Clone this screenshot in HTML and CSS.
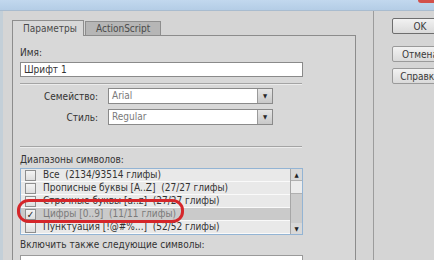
FILE: index.html
```html
<!DOCTYPE html>
<html lang="ru">
<head>
    <meta charset="UTF-8">
    <title>Свойства шрифта</title>
    <link rel="stylesheet" href="styles.css">
</head>
<body>
    <div class="titlebar">
        <div class="close-btn"></div>
    </div>

    <div class="window">
        <div class="frame"></div>

        <div class="main">
            <div class="tabs">
                <div class="tab active">Параметры</div>
                <div class="tab">ActionScript</div>
            </div>

            <div class="panel">
                <div class="label">Имя:</div>
                <div class="input">Шрифт 1</div>

                <div class="separator"></div>

                <div class="field-row">
                    <div class="field-label">Семейство:</div>
                    <div class="select">
                        <span class="select-value">Arial</span>
                        <span class="select-arrow">&#9660;</span>
                    </div>
                </div>
                <div class="field-row second">
                    <div class="field-label">Стиль:</div>
                    <div class="select">
                        <span class="select-value">Regular</span>
                        <span class="select-arrow">&#9660;</span>
                    </div>
                </div>

                <div class="separator lower"></div>

                <div class="label ranges-label">Диапазоны символов:</div>
                <div class="listbox">
                    <div class="list-rows">
                        <div class="list-row"><span class="checkbox"></span>Все&nbsp;&nbsp;(2134/93514 глифы)</div>
                        <div class="list-row"><span class="checkbox"></span>Прописные буквы [A..Z]&nbsp;&nbsp;(27/27 глифы)</div>
                        <div class="list-row"><span class="checkbox"></span>Строчные буквы [a..z]&nbsp;&nbsp;(27/27 глифы)</div>
                        <div class="list-row selected"><span class="checkbox checked">&#10003;</span>Цифры [0..9]&nbsp;&nbsp;(11/11 глифы)</div>
                        <div class="list-row"><span class="checkbox"></span>Пунктуация [!@#%...]&nbsp;&nbsp;(52/52 глифы)</div>
                    </div>
                    <div class="scrollbar">
                        <div class="scroll-btn">&#9650;</div>
                        <div class="scroll-thumb"></div>
                        <div class="scroll-track"></div>
                        <div class="scroll-btn">&#9660;</div>
                    </div>
                    <div class="highlight"></div>
                </div>

                <div class="label include-label">Включить также следующие символы:</div>
                <div class="input empty"></div>
            </div>
        </div>

        <div class="vline"></div>

        <div class="buttons">
            <button class="button">OK</button>
            <button class="button cancel">Отмена</button>
            <button class="button help">Справка</button>
        </div>
    </div>
</body>
</html>
```

FILE: styles.css
```css
body {
    margin: 0;
    padding: 0;
    width: 434px;
    height: 260px;
    overflow: hidden;
    background-color: #d5d5d5;
    font-family: "DejaVu Sans Condensed", "DejaVu Sans", sans-serif;
    font-size: 10px;
    color: #333333;
}

.titlebar {
    height: 10px;
    background: linear-gradient(to bottom, #c2d8ee, #b4cde6);
    border-bottom: 1px solid #a9bccf;
    position: relative;
}

.close-btn {
    position: absolute;
    right: 0;
    top: 0;
    width: 16px;
    height: 3px;
    background-color: #d2504a;
    border-radius: 0 0 0 5px;
}

.window {
    display: flex;
    height: 249px;
    width: 434px;
    overflow: hidden;
}

.window > div {
    flex-shrink: 0;
}

.frame {
    width: 3px;
    background-color: #c3cfd8;
}

.main {
    width: 344px;
    margin-left: 9px;
    display: flex;
    flex-direction: column;
}

.tabs {
    display: flex;
    margin-top: 9px;
    height: 15px;
    align-items: flex-end;
}

.tab {
    height: 13px;
    line-height: 13px;
    padding: 0 10px;
    border: 1px solid #8e8e8e;
    border-bottom: none;
    background-color: #b6b6b6;
    color: #4a4a4a;
    margin-left: 1px;
}

.tab.active {
    height: 15px;
    line-height: 16px;
    margin-left: 0;
    margin-bottom: -1px;
    background-color: #d8d8d8;
    position: relative;
    z-index: 1;
    width: 50px;
}

.panel {
    flex: 1;
    border: 1px solid #8c8c8c;
    border-bottom: none;
    background-color: #d8d8d8;
    padding-left: 7px;
}

.label {
    height: 12px;
    line-height: 12px;
    margin-top: 11px;
}

.input {
    width: 278px;
    height: 13px;
    line-height: 13px;
    margin-top: 3px;
    padding-left: 3px;
    border: 1px solid #8a8a8a;
    background-color: #ffffff;
}

.input.empty {
    margin-top: 4px;
    border-color: #9a9a9a;
}

.separator {
    width: 282px;
    height: 1px;
    margin-top: 6px;
    background-color: #a4a4a4;
    border-bottom: 1px solid #ececec;
}

.separator.lower {
    margin-top: 21px;
}

.field-row {
    display: flex;
    align-items: center;
    margin-top: 3px;
}

.field-row.second {
    margin-top: 5px;
}

.field-label {
    width: 78px;
    text-align: right;
    margin-right: 10px;
}

.select {
    width: 163px;
    height: 14px;
    border: 1px solid #8a8a8a;
    background-color: #ffffff;
    display: flex;
}

.select-value {
    flex: 1;
    line-height: 14px;
    padding-left: 3px;
    color: #7a7a7a;
}

.select-arrow {
    width: 14px;
    border-left: 1px solid #9a9a9a;
    background: linear-gradient(to bottom, #e6e6e6, #c8c8c8);
    color: #2a2a2a;
    font-size: 6px;
    line-height: 14px;
    text-align: center;
}

.ranges-label {
    margin-top: 6px;
}

.listbox {
    position: relative;
    display: flex;
    width: 281px;
    height: 65px;
    margin-top: 2px;
    border: 1px solid #93b4d4;
    background-color: #e9e9e9;
}

.list-rows {
    flex: 1;
}

.list-row {
    height: 12px;
    line-height: 12px;
    border-bottom: 1px solid #fafafa;
    display: flex;
    align-items: center;
    white-space: nowrap;
    overflow: hidden;
}

.list-row.selected {
    background-color: #cacaca;
    color: #7a7a7a;
}

.checkbox {
    width: 9px;
    height: 9px;
    margin: 0 7px 0 4px;
    border: 1px solid #8e8e8e;
    background: linear-gradient(to bottom, #f4f4f4, #dedede);
    flex-shrink: 0;
    font-size: 10px;
    line-height: 9px;
    text-align: center;
    color: #222;
}

.scrollbar {
    width: 11px;
    border-left: 1px solid #a6a6a6;
    display: flex;
    flex-direction: column;
    background-color: #cbcbcb;
}

.scroll-btn {
    height: 11px;
    font-size: 6px;
    line-height: 11px;
    text-align: center;
    color: #222;
    background-color: #d8d8d8;
}

.scroll-thumb {
    height: 12px;
    background-color: #ececec;
    border-top: 1px solid #b0b0b0;
    border-bottom: 1px solid #b0b0b0;
}

.scroll-track {
    flex: 1;
}

.highlight {
    position: absolute;
    left: -4px;
    top: 30px;
    width: 161px;
    height: 18px;
    border: 3px solid #d5262a;
    border-radius: 12px / 11px;
}

.include-label {
    margin-top: 4px;
}

.vline {
    width: 1px;
    margin-left: 17px;
    background-color: #9c9c9c;
}

.buttons {
    display: flex;
    flex-direction: column;
    margin-left: 18px;
}

.button {
    width: 56px;
    height: 16px;
    padding: 0;
    margin-top: 7px;
    border: 1px solid #6e6e6e;
    border-radius: 2px;
    background: linear-gradient(to bottom, #f2f2f2, #dadada);
    font-family: "DejaVu Sans Condensed", "DejaVu Sans", sans-serif;
    font-size: 10px;
    color: #3a3a3a;
    text-align: center;
    white-space: nowrap;
}

.button.cancel {
    margin-top: 12px;
    border-color: #9a9a9a;
}

.button.help {
    margin-top: 6px;
    border-color: #9a9a9a;
}
```
